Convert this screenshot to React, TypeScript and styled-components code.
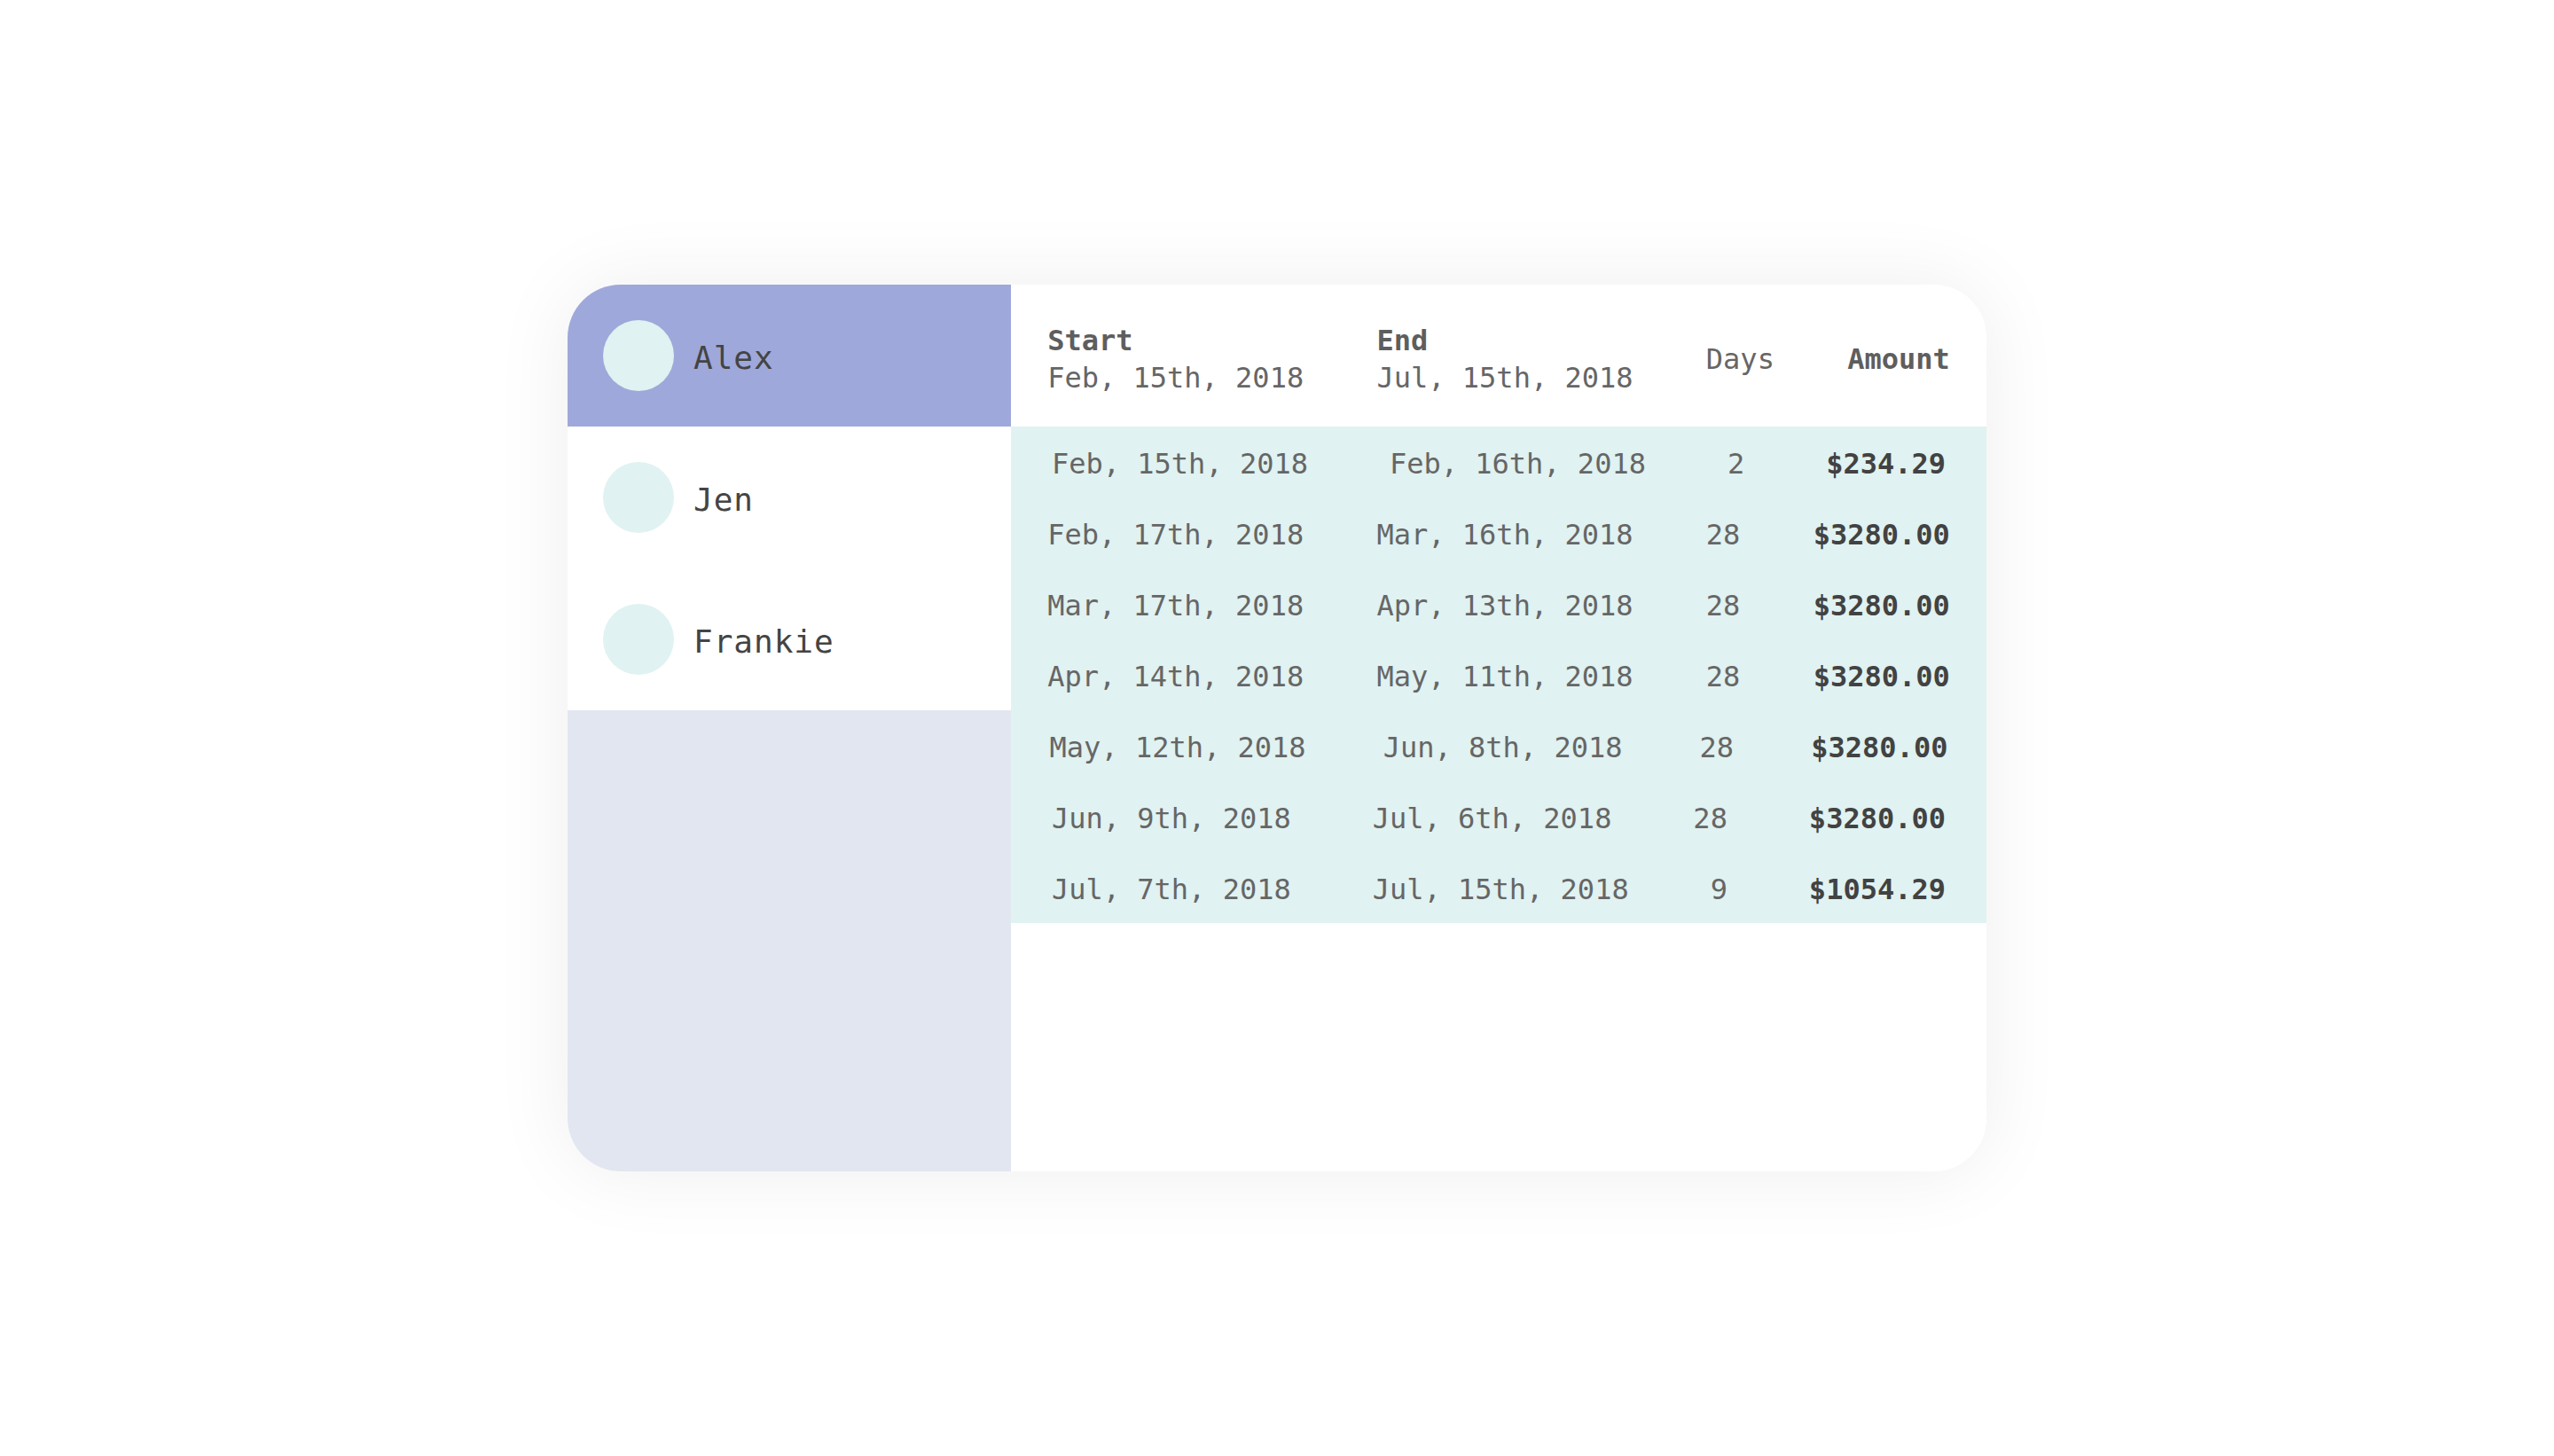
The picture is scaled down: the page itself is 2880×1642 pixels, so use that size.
import React from 'react';
import styled, { createGlobalStyle } from 'styled-components';

const GlobalStyle = createGlobalStyle`
  html, body {
    margin: 0;
    padding: 0;
    background: #ffffff;
  }
  body {
    font-family: 'DejaVu Sans Mono', 'Liberation Mono', monospace;
  }
`;

const Page = styled.div`
  width: 2880px;
  height: 1642px;
  display: flex;
  align-items: center;
  justify-content: center;
`;

const Card = styled.div`
  width: 1600px;
  height: 1000px;
  display: flex;
  border-radius: 60px;
  overflow: hidden;
  background: #ffffff;
  box-shadow: 0 0 90px rgba(0, 0, 0, 0.07);
`;

const Sidebar = styled.aside`
  width: 500px;
  display: flex;
  flex-direction: column;
  background: #e2e6f0;
`;

const Person = styled.div<{ $active?: boolean }>`
  height: 160px;
  display: flex;
  align-items: center;
  gap: 22px;
  padding-left: 40px;
  background: ${({ $active }) => ($active ? '#9fa8da' : '#ffffff')};
`;

const Avatar = styled.div`
  width: 80px;
  height: 80px;
  border-radius: 50%;
  background: #e0f2f1;
`;

const Name = styled.span`
  padding-top: 4px;
  font-size: 36px;
  letter-spacing: 1px;
  color: #444444;
`;

const Main = styled.section`
  flex: 1;
  display: flex;
  flex-direction: column;
  background: #ffffff;
`;

const HeadRow = styled.div`
  height: 160px;
  display: flex;
  justify-content: space-around;
  align-items: center;
`;

const HeadCell = styled.div`
  display: flex;
  flex-direction: column;
  padding-top: 7px;
  font-size: 32px;
  line-height: 42px;
  color: #666666;
  white-space: pre;
`;

const HeadLabel = styled.span<{ $bold?: boolean }>`
  font-weight: ${({ $bold }) => ($bold ? 700 : 400)};
  color: ${({ $bold }) => ($bold ? '#5e5e5e' : '#666666')};
`;

const Rows = styled.div`
  display: flex;
  flex-direction: column;
  background: #e0f2f1;
`;

const Row = styled.div`
  height: 80px;
  padding-top: 3px;
  box-sizing: border-box;
  display: flex;
  justify-content: space-around;
  align-items: center;
`;

const Cell = styled.span<{ $amount?: boolean }>`
  font-size: 32px;
  white-space: pre;
  font-weight: ${({ $amount }) => ($amount ? 700 : 400)};
  color: ${({ $amount }) => ($amount ? '#424242' : '#666666')};
`;

const people = ['Alex', 'Jen', 'Frankie'];

const periods = [
  { start: 'Feb, 15th, 2018', end: 'Feb, 16th, 2018', days: 2, amount: '$234.29' },
  { start: 'Feb, 17th, 2018', end: 'Mar, 16th, 2018', days: 28, amount: '$3280.00' },
  { start: 'Mar, 17th, 2018', end: 'Apr, 13th, 2018', days: 28, amount: '$3280.00' },
  { start: 'Apr, 14th, 2018', end: 'May, 11th, 2018', days: 28, amount: '$3280.00' },
  { start: 'May, 12th, 2018', end: 'Jun, 8th, 2018', days: 28, amount: '$3280.00' },
  { start: 'Jun, 9th, 2018', end: 'Jul, 6th, 2018', days: 28, amount: '$3280.00' },
  { start: 'Jul, 7th, 2018', end: 'Jul, 15th, 2018', days: 9, amount: '$1054.29' },
];

const App: React.FC = () => {
  return (
    <Page>
      <GlobalStyle />
      <Card>
        <Sidebar>
          {people.map((name, i) => (
            <Person key={name} $active={i === 0}>
              <Avatar />
              <Name>{name}</Name>
            </Person>
          ))}
        </Sidebar>

        <Main>
          <HeadRow>
            <HeadCell>
              <HeadLabel $bold>Start</HeadLabel>
              <span>Feb, 15th, 2018</span>
            </HeadCell>
            <HeadCell>
              <HeadLabel $bold>End</HeadLabel>
              <span>Jul, 15th, 2018</span>
            </HeadCell>
            <HeadCell>
              <HeadLabel>Days</HeadLabel>
            </HeadCell>
            <HeadCell>
              <HeadLabel $bold>Amount</HeadLabel>
            </HeadCell>
          </HeadRow>

          <Rows>
            {periods.map((p) => (
              <Row key={p.start}>
                <Cell>{p.start}</Cell>
                <Cell>{p.end}</Cell>
                <Cell>{p.days}</Cell>
                <Cell $amount>{p.amount}</Cell>
              </Row>
            ))}
          </Rows>
        </Main>
      </Card>
    </Page>
  );
};

export default App;
